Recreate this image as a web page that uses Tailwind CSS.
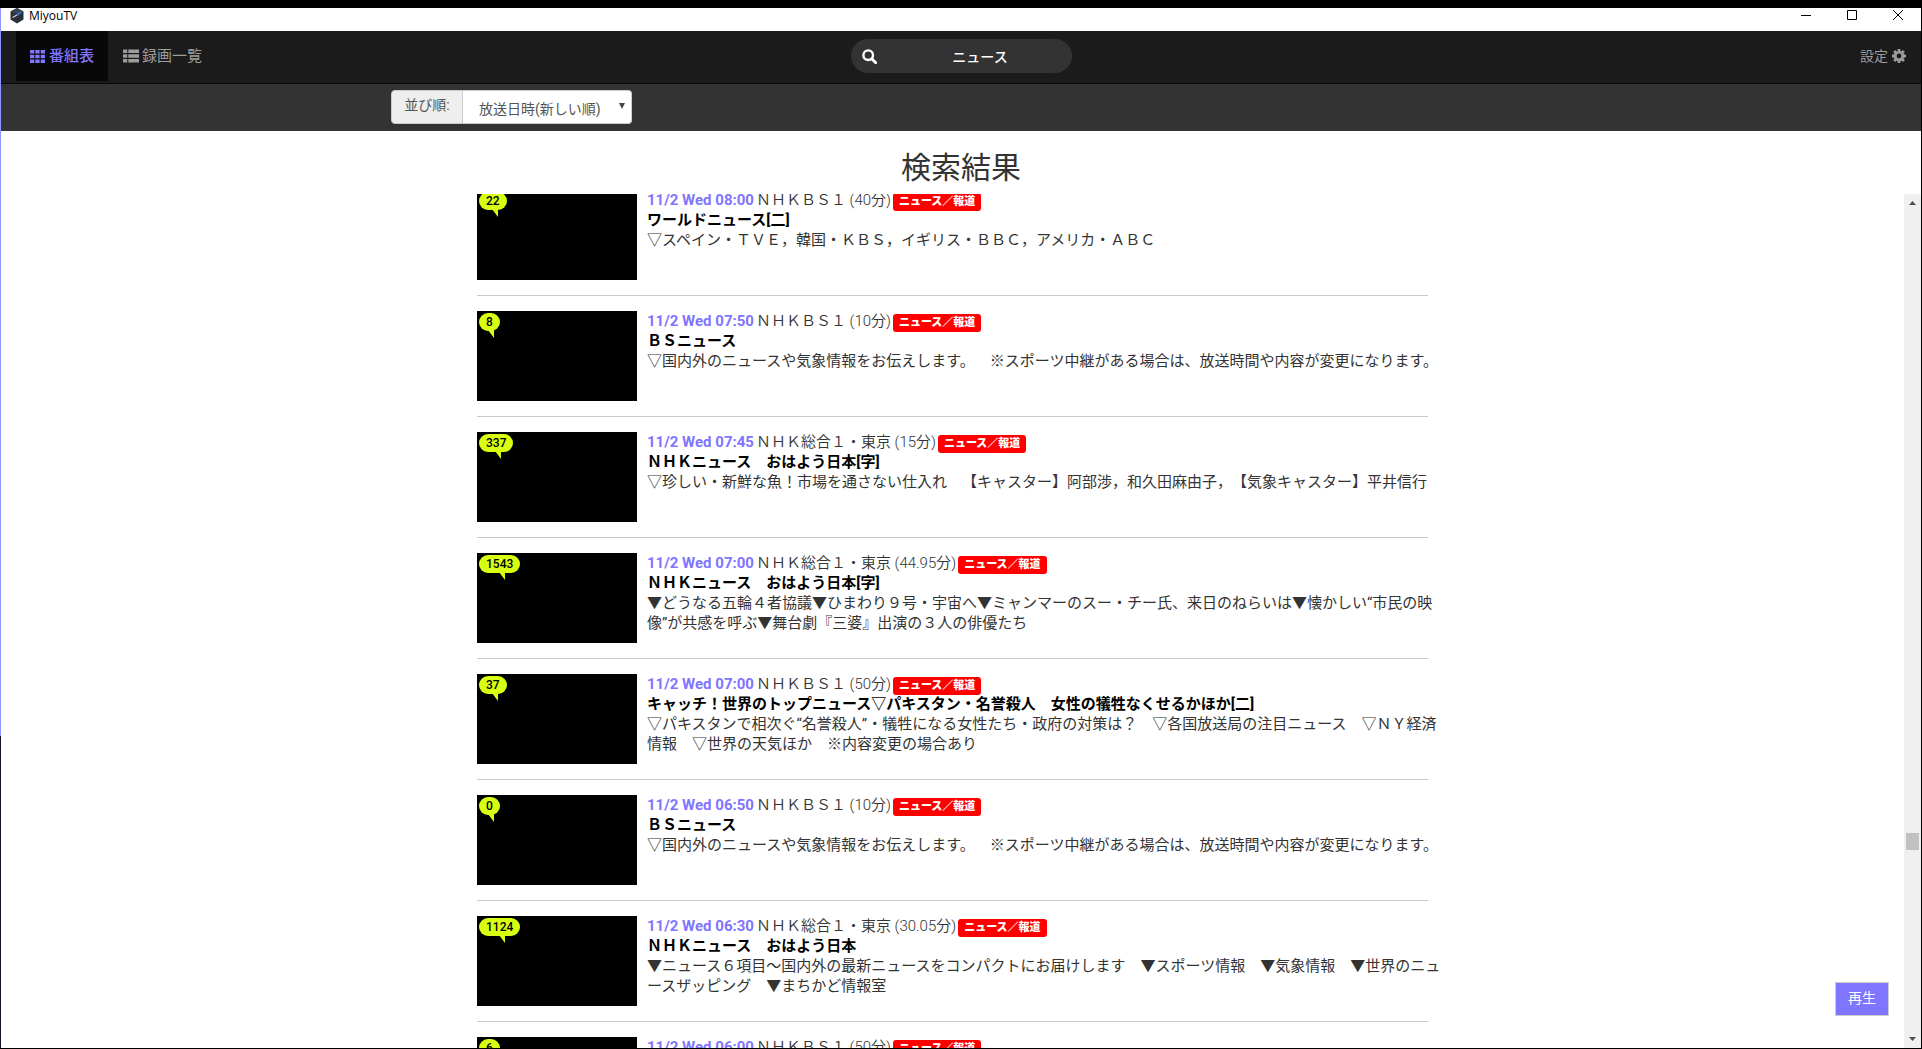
<!DOCTYPE html>
<html lang="ja">
<head>
<meta charset="utf-8">
<title>MiyouTV</title>
<script src="https://cdn.jsdelivr.net/npm/@tailwindcss/browser@4"></script>
</head>
<body class="flex h-screen flex-col overflow-hidden border-b border-black bg-white pt-2 font-['Roboto','Noto_Sans_CJK_JP',sans-serif] text-sm leading-5 text-[#333] [text-spacing-trim:space-all]">
<div class="-mt-2 h-2 shrink-0 bg-black"></div>
<div class="flex min-h-0 flex-1 border-r border-black">
  <div class="flex w-px shrink-0 flex-col">
    <div class="h-[70%] bg-[#9094ff]"></div>
    <div class="flex-1 bg-[#14142a]"></div>
  </div>
  <div class="relative flex min-w-0 flex-1 flex-col">
    <!-- Title bar -->
    <header class="flex h-[23px] shrink-0 items-start justify-between pl-2 text-black">
      <div class="flex items-center gap-1">
        <svg class="size-4" viewBox="0 0 16 16"><path d="M8 0l6.500 3.600v8L8 15.500 1.500 11.600v-8z" fill="#2b3038"/><path d="M8 0l6.500 3.600L8 6 1.500 3.600z" fill="#3c424e"/><path d="M3.500 9.500L8 7" stroke="#c9d3e0" stroke-width="1.300"/><path d="M8 7l4.500-2.800" stroke="#2f7df0" stroke-width="1.500"/></svg>
        <span class="font-['Open_Sans','Noto_Sans',sans-serif] text-xs leading-4">MiyouTV</span>
      </div>
      <div class="flex gap-9 pt-0.5 pr-[18px]">
        <button aria-label="最小化"><svg class="block size-[10px]" viewBox="0 0 10 10"><path d="M0 5.500h10" stroke="#000"/></svg></button>
        <button aria-label="最大化"><svg class="block size-[10px]" viewBox="0 0 10 10"><path d="M.5.5h9v9h-9z" fill="none" stroke="#000"/></svg></button>
        <button aria-label="閉じる"><svg class="block size-[10px]" viewBox="0 0 10 10"><path d="M0 0l10 10M10 0L0 10" stroke="#000"/></svg></button>
      </div>
    </header>
    <!-- Navigation -->
    <nav class="grid h-[53px] shrink-0 grid-cols-[1fr_auto_1fr] border-b border-[#080808] bg-[#1b1b1b] text-[#9d9d9d]">
      <div class="flex pl-[15px] text-[15px]">
        <a href="#" class="flex h-[50px] items-center gap-1 bg-[#080808] px-[14px] font-medium text-[#8075ff]">
          <svg class="size-[15px]" viewBox="0 0 15 15" fill="currentColor"><path d="M0 1h4.300v3.500H0zM5.300 1h4.300v3.500H5.300zM10.700 1H15v3.500h-4.300zM0 5.700h4.300v3.600H0zM5.300 5.700h4.300v3.600H5.300zM10.700 5.700H15v3.600h-4.300zM0 10.500h4.300V14H0zM5.300 10.500h4.300V14H5.300zM10.700 10.500H15V14h-4.300z"/></svg>番組表</a>
        <a href="#" class="flex h-[50px] items-center gap-[3px] px-[15px]">
          <svg class="size-4" viewBox="0 0 16 15" fill="currentColor"><path d="M0 1h4.300v3.500H0zM5.300 1H16v3.500H5.300zM0 5.700h4.300v3.600H0zM5.300 5.700H16v3.600H5.300zM0 10.500h4.300V14H0zM5.300 10.500H16V14H5.300z"/></svg>録画一覧</a>
      </div>
      <form class="mt-2 flex h-[34px] w-[221px] items-center rounded-full bg-[#333] text-white">
        <button type="button" aria-label="検索" class="pl-[11px]"><svg class="block size-[15px]" viewBox="0 0 15 15" fill="none" stroke="currentColor"><circle cx="6.200" cy="6.200" r="4.800" stroke-width="2.400"/><path d="M9.700 9.700l4 4" stroke-width="2.900" stroke-linecap="round"/></svg></button>
        <input type="text" aria-label="検索語" value="ニュース" class="h-full min-w-0 flex-1 bg-transparent pr-3 pl-6 text-center font-medium outline-none">
      </form>
      <div class="flex justify-end pr-[15px]">
        <a href="#" class="flex h-[50px] items-center gap-1">設定
          <svg class="size-[14px]" viewBox="0 0 14 14" fill="none" stroke="currentColor"><circle cx="7" cy="7" r="3.800" stroke-width="2.800"/><path d="M7 0v2.500M7 11.500V14M0 7h2.500M11.500 7H14M2.050 2.050l1.800 1.800M10.150 10.150l1.800 1.800M11.950 2.050l-1.800 1.800M3.850 10.150l-1.800 1.800" stroke-width="2.800"/></svg></a>
      </div>
    </nav>
    <!-- Sort order -->
    <div class="h-[47px] shrink-0 bg-[#333] pt-1.5">
      <div class="mx-auto flex max-w-[1140px] text-[#555]">
        <label for="sort" class="flex h-[34px] w-[72px] items-center justify-center rounded-l border border-[#ccc] bg-[#eee] pb-1">並び順:</label>
        <div class="relative">
          <select id="sort" class="block h-[34px] w-[169px] appearance-none rounded-r border border-l-0 border-[#ccc] bg-white pt-1 pl-4 outline-none"><option>放送日時(新しい順)</option></select>
          <svg class="pointer-events-none absolute top-[13px] right-[7px] h-[6px] w-[6px]" viewBox="0 0 7 7"><path d="M0 0h7L3.500 7z" fill="#444"/></svg>
        </div>
      </div>
    </div>
    <h1 class="flex h-[63px] shrink-0 items-center justify-center pt-[10px] text-[30px] leading-9">検索結果</h1>
    <!-- Results -->
    <div class="flex min-h-0 flex-1">
      <main class="min-w-0 flex-1 overflow-hidden">
        <ul id="results" class="mx-auto -mt-1 max-w-[951px]"></ul>
      </main>
      <div class="flex w-[17px] shrink-0 flex-col items-center bg-[#f0f0f0] py-[7px]">
        <svg class="h-1 w-[7px] shrink-0" viewBox="0 0 7 4"><path d="M0 4h7L3.500 0z" fill="#505050"/></svg>
        <div class="grow-[628]"></div>
        <div class="h-[17px] w-[13px] bg-[#c1c1c1]"></div>
        <div class="grow-[187]"></div>
        <svg class="h-1 w-[7px] shrink-0" viewBox="0 0 7 4"><path d="M0 0h7L3.500 4z" fill="#505050"/></svg>
      </div>
    </div>
    <button class="absolute right-8 bottom-8 h-[34px] w-[54px] border border-[#ccc] bg-[#8075ff] pb-0.5 text-white">再生</button>
  </div>
</div>
<script>
const bs = 'ＮＨＫＢＳ１', sogo = 'ＮＨＫ総合１・東京';
const news = '▽国内外のニュースや気象情報をお伝えします。　※スポーツ中継がある場合は、放送時間や内容が変更になります。';
const rows = [
  ['22', '08:00', bs, '40', 'ワールドニュース[二]', '▽スペイン・ＴＶＥ，韓国・ＫＢＳ，イギリス・ＢＢＣ，アメリカ・ＡＢＣ'],
  ['8', '07:50', bs, '10', 'ＢＳニュース', news],
  ['337', '07:45', sogo, '15', 'ＮＨＫニュース　おはよう日本[字]', '▽珍しい・新鮮な魚！市場を通さない仕入れ　【キャスター】阿部渉，和久田麻由子，【気象キャスター】平井信行'],
  ['1543', '07:00', sogo, '44.95', 'ＮＨＫニュース　おはよう日本[字]', '▼どうなる五輪４者協議▼ひまわり９号・宇宙へ▼ミャンマーのスー・チー氏、来日のねらいは▼懐かしい“市民の映像”が共感を呼ぶ▼舞台劇『三婆』出演の３人の俳優たち'],
  ['37', '07:00', bs, '50', 'キャッチ！世界のトップニュース▽パキスタン・名誉殺人　女性の犠牲なくせるかほか[二]', '▽パキスタンで相次ぐ“名誉殺人”・犠牲になる女性たち・政府の対策は？　▽各国放送局の注目ニュース　▽ＮＹ経済情報　▽世界の天気ほか　※内容変更の場合あり'],
  ['0', '06:50', bs, '10', 'ＢＳニュース', news],
  ['1124', '06:30', sogo, '30.05', 'ＮＨＫニュース　おはよう日本', '▼ニュース６項目～国内外の最新ニュースをコンパクトにお届けします　▼スポーツ情報　▼気象情報　▼世界のニュースザッピング　▼まちかど情報室'],
  ['6', '06:00', bs, '50', 'ＢＳニュース', news],
];
document.getElementById('results').innerHTML = rows.map(([n, time, ch, min, title, desc]) => `
<li class="mb-[15px] flex h-[106px] gap-[10px] border-b border-[#c8c8c8]">
  <div class="relative h-[90px] w-40 shrink-0 bg-black">
    <span class="absolute top-0.5 left-0.5 h-[18px] rounded-full bg-[#d8ff11] px-[7px] text-xs leading-[18px] font-medium text-black">${n}<svg class="absolute top-[17px] left-1/2 -ml-px h-2 w-[6px]" viewBox="0 0 6 8"><path d="M0 0h6v8z" fill="#d8ff11"/></svg></span>
  </div>
  <div class="min-w-0 flex-1 text-[15px]">
    <div class="flex h-5 gap-0.5 font-[350] whitespace-nowrap"><a href="#" class="font-bold text-[#8075ff]">11/2 Wed ${time}</a><span>${ch} (${min}分)</span><span class="mt-[3px] h-[18px] rounded-[3px] bg-[red] px-1.5 text-[11px] leading-[17px] font-black text-white">ニュース／報道</span></div>
    <h2 class="font-bold text-black">${title}</h2>
    <p class="-mr-5">${desc}</p>
  </div>
</li>`).join('');
</script>
</body>
</html>
